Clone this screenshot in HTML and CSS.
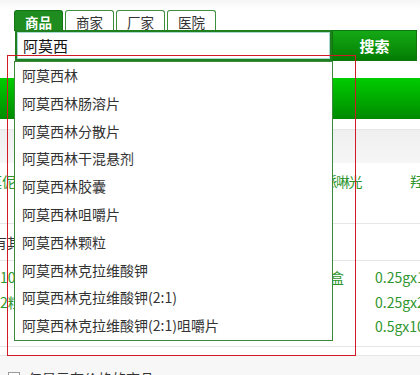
FILE: index.html
```html
<!DOCTYPE html>
<html lang="zh-CN">
<head>
<meta charset="utf-8">
<title>搜索</title>
<link rel="stylesheet" href="styles.css">
</head>
<body>
<div class="page">
  <div class="header">
    <div class="tabs">
      <div class="tab active">商品</div>
      <div class="tab">商家</div>
      <div class="tab">厂家</div>
      <div class="tab">医院</div>
    </div>
    <div class="searchrow">
      <div class="input">阿莫西</div>
      <div class="btn">搜索</div>
    </div>
    <ul class="dropdown">
      <li class="item">阿莫西林</li>
      <li class="item">阿莫西林肠溶片</li>
      <li class="item">阿莫西林分散片</li>
      <li class="item">阿莫西林干混悬剂</li>
      <li class="item">阿莫西林胶囊</li>
      <li class="item">阿莫西林咀嚼片</li>
      <li class="item">阿莫西林颗粒</li>
      <li class="item">阿莫西林克拉维酸钾</li>
      <li class="item">阿莫西林克拉维酸钾(2:1)</li>
      <li class="item">阿莫西林克拉维酸钾(2:1)咀嚼片</li>
    </ul>
  </div>
  <div class="greenbar"></div>
  <div class="gap"></div>
  <div class="band"></div>
  <div class="row row1">
    <span class="c-first green">莫伲</span>
    <span class="c-mid green">盐酸哌啉光</span>
    <span class="c-right green">羟</span>
  </div>
  <div class="row row2">
    <span class="c-first2 dark">有其</span>
  </div>
  <div class="row row3">
    <div class="line"><span class="c-left green">10</span><span class="c-box green">盒</span><span class="c-spec green">0.25gx12</span></div>
    <div class="line"><span class="c-left green">2粒</span><span class="c-box green"></span><span class="c-spec green">0.25gx24</span></div>
    <div class="line"><span class="c-left green"></span><span class="c-box green"></span><span class="c-spec green">0.5gx10</span></div>
  </div>
  <div class="spacer"></div>
  <div class="footer">
    <span class="check"></span><span class="footlabel">仅显示有价格的商品</span>
  </div>
  <div class="redbox"></div>
</div>
</body>
</html>
```

FILE: styles.css
```css
html, body {
  margin: 0;
  padding: 0;
  background: #fff;
}
body {
  width: 420px;
  height: 375px;
  overflow: hidden;
  font-family: "Noto Sans CJK SC", "Noto Sans", sans-serif;
  font-size: 14px;
  color: #333;
}
.page {
  position: relative;
  width: 420px;
}
.header {
  position: relative;
  z-index: 5;
  height: 78px;
  box-sizing: border-box;
  padding: 10px 0 0 14px;
  background: linear-gradient(#f5f5f5 0, #fff 10px);
}
.tabs {
  display: flex;
  gap: 2px;
  height: 21px;
}
.tab {
  width: 49px;
  box-sizing: border-box;
  border: 1px solid #3d8f3d;
  border-bottom: none;
  border-radius: 3px 3px 0 0;
  background: #fff;
  color: #333;
  font-size: 13.5px;
  line-height: 22px;
  text-align: center;
}
.tab.active {
  background: #1e8c1e;
  border-color: #157515;
  color: #fff;
  font-weight: bold;
}
.searchrow {
  display: flex;
  height: 31px;
  margin-top: -1px;
}
.input {
  width: 317px;
  margin-left: 1px;
  box-sizing: border-box;
  border: 2px solid #1f7f1f;
  box-shadow: inset 0 0 0 1px #a3d9d1;
  padding-left: 6px;
  font-size: 15px;
  line-height: 27px;
  color: #111;
  background: #fff;
}
.btn {
  width: 85px;
  box-sizing: border-box;
  border: 1px solid #0e760e;
  background: linear-gradient(#16a816, #0a900a 60%, #037c03);
  color: #fff;
  font-weight: bold;
  font-size: 15px;
  line-height: 29px;
  text-align: center;
}
.dropdown {
  position: absolute;
  left: 14px;
  top: 61px;
  width: 319px;
  height: 280px;
  box-sizing: border-box;
  margin: 0;
  padding: 0;
  list-style: none;
  border: 1px solid #3a8a3a;
  background: #fff;
}
.item {
  height: 27.8px;
  line-height: 27.8px;
  padding-left: 7px;
  color: #333;
  font-size: 14px;
  white-space: nowrap;
  overflow: hidden;
}
.greenbar {
  height: 41px;
  background: linear-gradient(#00cc00, #00a800 55%, #008a00);
}
.gap {
  height: 10px;
  border-bottom: 1px solid #e6e6e6;
}
.band {
  height: 33px;
  background: linear-gradient(#efefef, #f6f6f6);
}
.row {
  display: flex;
  white-space: nowrap;
  border-bottom: 1px solid #e6e6e6;
}
.row1 {
  height: 52px;
  padding-top: 8px;
  line-height: 20px;
}
.row2 {
  height: 28px;
  padding-top: 8px;
  line-height: 20px;
}
.row3 {
  display: block;
  height: 81px;
  padding-top: 4px;
}
.line {
  display: flex;
  height: 24.5px;
  line-height: 24.5px;
}
.green { color: #2f962f; }
.dark { color: #333; }
.c-first {
  flex: none;
  width: 302px;
  margin-left: -12px;
}
.c-first2 {
  flex: none;
  margin-left: -7px;
}
.c-mid {
  flex: none;
  width: 71px;
  text-align: right;
  letter-spacing: -1.5px;
}
.c-right {
  flex: none;
  margin-left: 49px;
}
.c-left {
  width: 300px;
  flex: none;
}
.c-box {
  width: 45px;
  margin-left: 30px;
  flex: none;
}
.c-spec { flex: none; }
.spacer {
  height: 8px;
  border-bottom: 1px solid #e6e6e6;
}
.footer {
  height: 40px;
  background: #f7f7f7;
  display: flex;
  align-items: flex-start;
  padding: 16px 0 0 8px;
  box-sizing: border-box;
}
.check {
  width: 12px;
  height: 12px;
  box-sizing: border-box;
  border: 1px solid #9a9a9a;
  background: #fff;
  flex: none;
}
.footlabel {
  margin-left: 8px;
  line-height: 14px;
  margin-top: -1px;
  font-size: 14px;
  color: #333;
}
.redbox {
  position: absolute;
  left: 7px;
  top: 55px;
  width: 349px;
  height: 301px;
  box-sizing: border-box;
  border: 1px solid #d01a24;
  z-index: 10;
  pointer-events: none;
}
```
